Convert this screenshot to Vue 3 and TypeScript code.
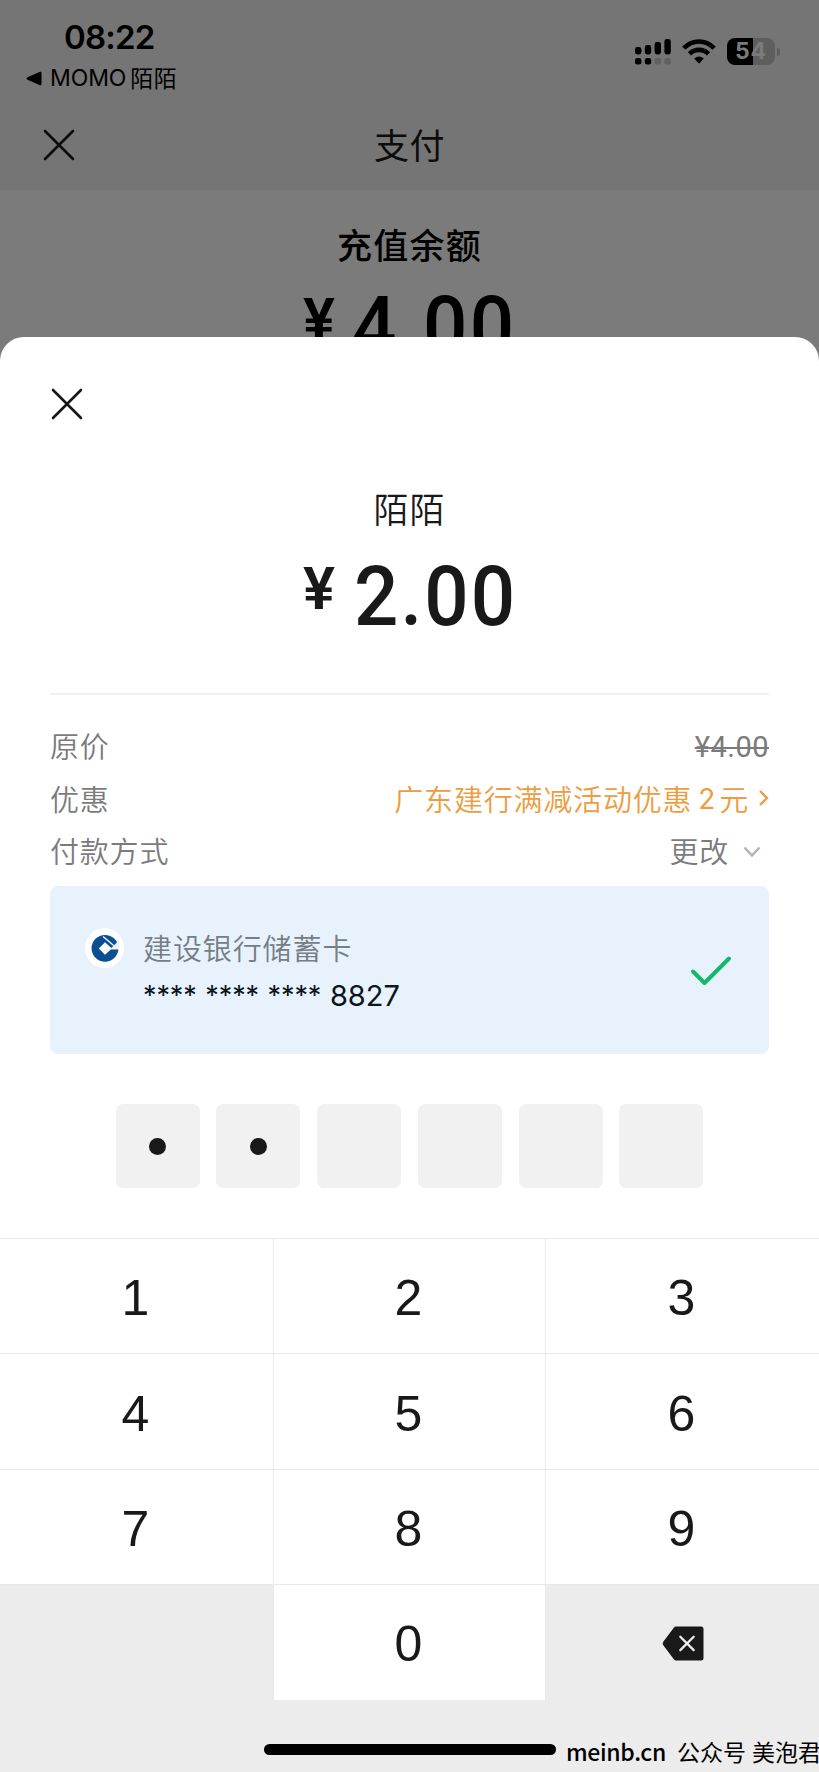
<script setup lang="ts">
import { ref } from 'vue'

interface Bar { x: number; y: number; h: number; on: boolean }

const bars: Bar[] = [
  { x: 0, y: 8, h: 7.5, on: true },
  { x: 9.8, y: 6, h: 9.5, on: true },
  { x: 19.6, y: 3, h: 12.5, on: true },
  { x: 29.4, y: 0, h: 15.5, on: true },
  { x: 0, y: 19, h: 6.6, on: true },
  { x: 9.8, y: 19, h: 6.6, on: true },
  { x: 19.6, y: 19, h: 6.6, on: false },
  { x: 29.4, y: 19, h: 6.6, on: false },
]
const keys = ['1', '2', '3', '4', '5', '6', '7', '8', '9', '', '0', 'del']
const entered = ref('••')

function press(key: string) {
  if (key === 'del') entered.value = entered.value.slice(0, -1)
  else if (key && entered.value.length < 6) entered.value += '•'
}
</script>

<template>
  <div class="screen">
    <header class="top">
      <div class="status">
        <div class="left">
          <div class="time">08:22</div>
          <div class="back">
            <svg width="16" height="15" viewBox="0 0 16 15"><path d="M1 6.6 14 .8Q15.5.4 15.5 2V13Q15.5 14.6 14 14.2L1 8.4Q0 7.5 1 6.6Z" /></svg>
            <span class="momo">MOMO</span><span class="momo-cn">陌陌</span>
          </div>
        </div>
        <div class="indicators">
          <svg width="36" height="26" viewBox="0 0 36 26">
            <rect v-for="(b, i) in bars" :key="i" :x="b.x" :y="b.y" width="6.4" :height="b.h" rx="2.4" :fill="b.on ? '#000' : '#606060'" />
          </svg>
          <svg class="wifi" width="34" height="25" viewBox="0 0 34 25">
            <g fill="none" stroke="#000" stroke-width="4.6">
              <path d="M1.8 9.2Q8.4 2.5 17 2.5T32.2 9.2" />
              <path d="M7.5 14.8Q11.5 10.9 17 10.9T26.5 14.8" />
            </g>
            <path d="M12.2 19.5Q17 15.6 21.8 19.5L17.8 23.9Q17 24.7 16.2 23.9Z" />
          </svg>
          <div class="battery"><span>5</span><span>4</span></div>
          <i class="nub"></i>
        </div>
      </div>
      <div class="nav">
        <svg class="x" width="32" height="32" viewBox="0 0 32 32"><path d="M2 2 30 30M30 2 2 30" /></svg>
        <span class="nav-title">支付</span>
      </div>
    </header>

    <section class="behind">
      <div class="behind-title">充值余额</div>
      <div class="amount"><span class="yen">¥</span><span class="value">4.00</span></div>
    </section>

    <main class="sheet">
      <svg class="x sheet-x" width="32" height="32" viewBox="0 0 32 32"><path d="M2 2 30 30M30 2 2 30" /></svg>
      <div class="merchant">陌陌</div>
      <div class="amount"><span class="yen">¥</span><span class="value">2.00</span></div>

      <div class="details">
        <div class="row"><span>原价</span><span class="orig">¥4.00</span></div>
        <div class="row">
          <span>优惠</span>
          <span class="promo">广东建行满减活动优惠<b>2</b>元
            <svg width="10" height="18" viewBox="0 0 10 18"><path d="M1 2 8 9 1 16" /></svg>
          </span>
        </div>
        <div class="row">
          <span>付款方式</span>
          <span class="change">更改
            <svg width="18" height="12" viewBox="0 0 18 12"><path d="M1.5 1.5 9 9.5 16.5 1.5" /></svg>
          </span>
        </div>
      </div>

      <div class="card">
        <div class="logo">
          <svg width="28" height="29" viewBox="0 0 29 30">
            <circle cx="14.5" cy="14.8" r="13.9" fill="#0a4f92" />
            <path fill="#e9f3fb" d="M21 14.500 28.600 7 30 7V16H21Z" />
            <path fill="#fff" d="M14.500 8.400 22 15.200 20.800 15.900 14.500 21.600 8.100 15Z" />
            <path d="M12.500 2.500 23.500 11.800" fill="none" stroke="#fff" stroke-width="1.300" />
          </svg>
        </div>
        <div class="card-text">
          <div class="bank">建设银行储蓄卡</div>
          <div class="number"><span v-for="n in 3" :key="n" class="stars">****</span><span>8827</span></div>
        </div>
        <svg class="check" width="42" height="32" viewBox="0 0 42 32"><path d="M3 16.5 14.5 28 39 3.5" /></svg>
      </div>

      <div class="pin">
        <div v-for="n in 6" :key="n" class="cell"><i v-if="n <= entered.length"></i></div>
      </div>

      <div class="keypad">
        <div v-for="(k, i) in keys" :key="i" class="key" :class="{ blank: k === '' || k === 'del' }" @click="press(k)">
          <svg v-if="k === 'del'" width="42" height="35" viewBox="0 0 42 35">
            <path fill="#191919" d="M14.2.5H39Q41.5.5 41.5 3V32Q41.5 34.500 39 34.500H14.200Q12.700 34.500 11.800 33.300L1.300 19.200Q0 17.500 1.300 15.800L11.800 1.700Q12.700.5 14.200.5Z" />
            <path d="M18.300 10.700 31.700 24.100M31.700 10.700 18.300 24.100" fill="none" stroke="#ececec" stroke-width="2.300" stroke-linecap="round" />
          </svg>
          <template v-else>{{ k }}</template>
        </div>
      </div>
      <footer class="foot">
        <div class="home"></div>
        <div class="mark"><span>meinb.cn</span><span>公众号</span><span>美泡君</span></div>
      </footer>
    </main>
  </div>
</template>

<style>
body { margin: 0; }
</style>

<style scoped>
.screen {
  width: 819px; height: 1772px; overflow: hidden;
  background: #7b7b7b; color: #000;
  font-family: "Noto Sans CJK SC", sans-serif;
  display: flex; flex-direction: column;
}
svg { display: block; flex: none; }
.top { height: 190px; background: #757575; flex: none; }
.status { height: 100px; display: flex; justify-content: space-between; }
.left { padding-left: 26px; }
.time {
  font: 600 33px/40px Inter, sans-serif;
  margin: 17px 0 0 38px; letter-spacing: -.8px;
}
.back { display: flex; align-items: center; height: 30px; margin-top: 6px; }
.momo { font: 400 23px/30px Inter, sans-serif; margin-left: 8px; letter-spacing: -.1px; }
.momo-cn { font-size: 23px; line-height: 30px; margin: -2px 0 0 4px; letter-spacing: .5px; }
.indicators { display: flex; align-items: center; height: 27px; margin: 38px 39px 0 0; }
.wifi { margin: 0 11px; }
.battery {
  width: 48px; height: 27px; border-radius: 8px; box-sizing: border-box; padding: 0 9px 0 8px;
  background: linear-gradient(90deg, #000 26px, #5e5e5e 26px);
  font: 700 23px/27px Inter, sans-serif; color: #7b7b7b;
  display: flex; justify-content: space-between;
}
.nub { width: 3px; height: 8px; margin-left: 2px; background: #5e5e5e; border-radius: 0 3px 3px 0; }
.nav { height: 90px; display: flex; align-items: center; padding-left: 43px; }
.x { fill: none; stroke: #171717; stroke-width: 2.6; stroke-linecap: round; }
.nav .x { stroke: #0c0c0c; margin-bottom: 1px; }
.nav-title { font-size: 35px; line-height: 50px; margin: 0 0 3px 299px; letter-spacing: .5px; color: #0c0c0c; }
.behind { height: 147px; overflow: hidden; flex: none; text-align: center; }
.behind-title { font-size: 35px; font-weight: 500; line-height: 50px; letter-spacing: 1.2px; padding-top: 29px; }
.amount {
  font: 500 84px/100px Roboto, sans-serif;
  display: flex; padding-left: 303px; height: 100px;
}
.amount .yen { font-size: 60px; font-weight: 600; line-height: 86px; width: 51px; flex: none; text-align: left; }
.amount .value { letter-spacing: 2.2px; transform: scaleX(.93); transform-origin: 0 0; }
.behind .amount { margin-top: 8px; }
.behind .value { margin-left: -2px; letter-spacing: 2.6px; }
.sheet { flex: 1; background: #fff; border-radius: 24px 24px 0 0; overflow: hidden; color: #191919; }
.sheet-x { margin: 51px 0 0 51px; }
.merchant { text-align: center; font-size: 35px; line-height: 50px; margin-top: 63px; letter-spacing: 1px; font-weight: 350; }
.sheet .amount { margin-top: 14px; }
.sheet .yen { line-height: 84px; }
.details { margin: 46px 50px 0; border-top: 2px solid #f0f0f0; padding-top: 24px; height: 167px; }
.row {
  height: 52.5px; display: flex; justify-content: space-between; align-items: center;
  font-size: 29px; font-weight: 350; letter-spacing: .8px; color: #7b7b7b;
}
.orig { font: 400 29px/40px Roboto, sans-serif; letter-spacing: .5px; padding-top: 4px; text-decoration: line-through; text-decoration-thickness: 2px; }
.promo, .change { display: flex; align-items: center; }
.promo { color: #eb9d40; }
.promo b { font: 400 28px/40px Inter, sans-serif; margin: 2px 3px 0 6px; }
.promo svg { margin-left: 10px; fill: none; stroke: #eb9d40; stroke-width: 2.4; }
.change svg { margin: 3px 8px 0 14px; fill: none; stroke: #b2b2b2; stroke-width: 2.5; }
.card {
  margin: 0 50px; height: 168px; border-radius: 8px; background: #e7f2fc;
  display: flex; box-sizing: border-box; padding: 42px 37px 0 35px;
}
.logo {
  width: 39px; height: 40px; border-radius: 50%; background: #fff; flex: none;
  display: flex; align-items: center; justify-content: center;
}
.card-text { margin: -1px 0 0 19px; flex: 1; }
.bank { font-size: 29px; font-weight: 350; letter-spacing: .9px; line-height: 40px; color: #757d85; }
.number { display: flex; font: 400 29px/40px Inter, sans-serif; margin-top: 9px; color: #0d151c; }
.stars { width: 62.3px; font-size: 27px; letter-spacing: -.1px; }
.check { margin-top: 27px; fill: none; stroke: #14b86c; stroke-width: 4; stroke-linecap: round; stroke-linejoin: round; }
.pin { display: flex; justify-content: center; gap: 16.800px; margin-top: 50px; height: 84px; }
.cell { width: 84px; border-radius: 7px; background: #f1f1f1; display: flex; align-items: center; justify-content: center; }
.cell i { width: 17px; height: 17px; border-radius: 50%; background: #191919; }
.keypad {
  margin-top: 50px; display: grid; grid-template-columns: 273px 271px 1fr; grid-template-rows: repeat(4, 114.400px);
  gap: 1px; background: #e9e9e9; padding-top: 1px; font: 400 50px/1 "Liberation Sans", Arial, sans-serif;
}
.key { background: #fff; display: flex; align-items: center; justify-content: center; padding: 4px 2px 0 0; box-sizing: border-box; }
.key.blank { background: #ececec; padding: 2px 0 0; }
.foot { background: #ececec; height: 80px; display: flex; padding: 44px 0 0 264px; box-sizing: border-box; }
.home { width: 292px; height: 11px; border-radius: 6px; background: #000; flex: none; }
.mark { display: flex; margin: -8px 0 0 10px; font-size: 23px; line-height: 30px; white-space: nowrap; color: #000; }
.mark span:nth-child(1) { font-weight: 500; letter-spacing: -.35px; }
.mark span:nth-child(2) { margin-left: 11px; }
.mark span:nth-child(3) { margin-left: 6px; }
</style>
